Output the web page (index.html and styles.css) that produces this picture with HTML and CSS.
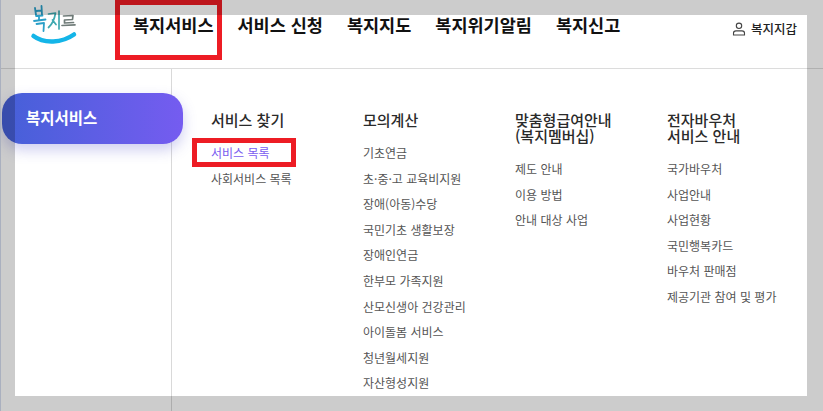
FILE: index.html
```html
<!DOCTYPE html>
<html lang="ko">
<head>
<meta charset="utf-8">
<title>복지서비스</title>
<link rel="stylesheet" href="styles.css">
</head>
<body>
<div class="page">
  <header class="header">
    <a class="logo" href="#">
      <svg width="50" height="46" viewBox="0 0 50 46" fill="none" stroke-linecap="round" stroke-linejoin="round">
        <path d="M7 8L8 15M13.500 6L14 15M8 11L13.500 10.500M8 16L14.500 15.500M11 16V19.500M6 21L17.500 19.500M8.500 24L16 23L15.500 31" stroke="#2a9fc8" stroke-width="1.800"/>
        <path d="M20.500 14L27.500 13C26.500 19 24.500 24 20.500 27.500M24.500 20L28 24.500M31 11V29" stroke="#3fa9b0" stroke-width="1.700"/>
        <path d="M35.500 16L45 15.500L44.500 19.500L36.500 20L36.500 23L45.500 22.500M34 25.500L47 24.800" stroke="#6f7b78" stroke-width="1.700"/>
        <path d="M5.500 36C16 44 34 43 46 34.500" stroke="#14b5e8" stroke-width="4.500"/>
      </svg>
    </a>
    <nav class="gnb">
      <a href="#">복지서비스</a>
      <a href="#">서비스 신청</a>
      <a href="#">복지지도</a>
      <a href="#">복지위기알림</a>
      <a href="#">복지신고</a>
    </nav>
    <a class="wallet" href="#">
      <svg width="14" height="14" viewBox="0 0 14 14" fill="none" stroke="#444" stroke-width="1.100">
        <circle cx="7" cy="3.800" r="2.700"/>
        <path d="M1.500 13V11.200C1.500 9.800 2.600 8.900 4 8.900H10C11.400 8.900 12.500 9.800 12.500 11.200V13Z"/>
      </svg>
      <span>복지지갑</span>
    </a>
  </header>
  <main class="body">
    <aside class="side">
      <div class="pill">복지서비스</div>
    </aside>
    <section class="columns">
      <div class="col">
        <h2>서비스 찾기</h2>
        <ul>
          <li class="active">서비스 목록</li>
          <li>사회서비스 목록</li>
        </ul>
      </div>
      <div class="col">
        <h2>모의계산</h2>
        <ul>
          <li>기초연금</li>
          <li>초·중·고 교육비지원</li>
          <li>장애(아동)수당</li>
          <li>국민기초 생활보장</li>
          <li>장애인연금</li>
          <li>한부모 가족지원</li>
          <li>산모신생아 건강관리</li>
          <li>아이돌봄 서비스</li>
          <li>청년월세지원</li>
          <li>자산형성지원</li>
        </ul>
      </div>
      <div class="col">
        <h2>맞춤형급여안내<br>(복지멤버십)</h2>
        <ul>
          <li>제도 안내</li>
          <li>이용 방법</li>
          <li>안내 대상 사업</li>
        </ul>
      </div>
      <div class="col">
        <h2>전자바우처<br>서비스 안내</h2>
        <ul>
          <li>국가바우처</li>
          <li>사업안내</li>
          <li>사업현황</li>
          <li>국민행복카드</li>
          <li>바우처 판매점</li>
          <li>제공기관 참여 및 평가</li>
        </ul>
      </div>
    </section>
  </main>
  <div class="mark mark-nav"></div>
  <div class="mark mark-item"></div>
  <div class="dim dim-top"></div>
  <div class="dim dim-left"></div>
  <div class="dim dim-right"></div>
  <div class="dim dim-bottom"></div>
  <div class="edge"></div>
</div>
</body>
</html>
```
FILE: styles.css
```css
* { box-sizing: border-box; }
html, body { margin: 0; padding: 0; }
body {
  width: 823px;
  height: 411px;
  overflow: hidden;
  background: #fff;
  font-family: "Noto Sans CJK KR", "Noto Sans", sans-serif;
  color: #333;
}
a { color: inherit; text-decoration: none; }
.page { position: relative; width: 823px; height: 411px; overflow: hidden; }
.header {
  display: flex;
  align-items: flex-start;
  height: 69px;
  border-bottom: 1px solid #dcdcdc;
  padding-left: 28px;
}
.logo { display: block; width: 50px; height: 46px; }
.gnb {
  display: flex;
  gap: 24px;
  margin-left: 55px;
  margin-top: 11px;
  font-size: 17.500px;
  font-weight: 700;
  line-height: 28px;
  color: #111;
  white-space: nowrap;
}
.wallet {
  display: flex;
  align-items: center;
  gap: 5px;
  margin-left: auto;
  margin-right: 26px;
  margin-top: 20px;
  font-size: 12.500px;
  font-weight: 500;
  color: #222;
  line-height: 18px;
}
.body { display: flex; height: 342px; }
.side { width: 172px; flex: none; border-right: 1px solid #d9d9d9; padding: 24px 0 0 2px; height: 342px; }
.pill {
  width: 181px;
  height: 51px;
  border-radius: 20px;
  padding: 13px 0 0 24px;
  font-size: 15.500px;
  font-weight: 700;
  line-height: 23px;
  color: #fff;
  background: linear-gradient(90deg, #4560d8, #755cf0);
  box-shadow: 0 6px 14px rgba(80, 80, 200, .28);
  position: relative;
}
.columns { display: flex; padding: 43px 0 0 39px; }
.col { width: 152px; flex: none; }
h2 {
  margin: 0 0 12px;
  font-size: 15px;
  font-weight: 500;
  line-height: 16px;
  color: #2a2a2a;
  white-space: nowrap;
}
ul { list-style: none; margin: 0; padding: 0; }
li {
  font-size: 12px;
  line-height: 25.600px;
  color: #555;
  white-space: nowrap;
}
li.active { color: #7a5cf0; }
.dim { position: absolute; background: rgba(0, 0, 0, .2); }
.dim-top { left: 0; top: 0; width: 823px; height: 15px; }
.dim-left { left: 0; top: 15px; width: 15px; height: 381px; }
.dim-right { left: 807px; top: 15px; width: 16px; height: 381px; }
.dim-bottom { left: 0; top: 396px; width: 823px; height: 15px; }
.edge { position: absolute; left: 0; top: 0; width: 1px; height: 411px; background: #aab0bf; }
.mark { position: absolute; border: 5px solid #ed1c24; }
.mark-nav { left: 115px; top: 0; width: 107px; height: 60px; }
.mark-item { left: 192px; top: 138px; width: 104px; height: 29px; }
```
